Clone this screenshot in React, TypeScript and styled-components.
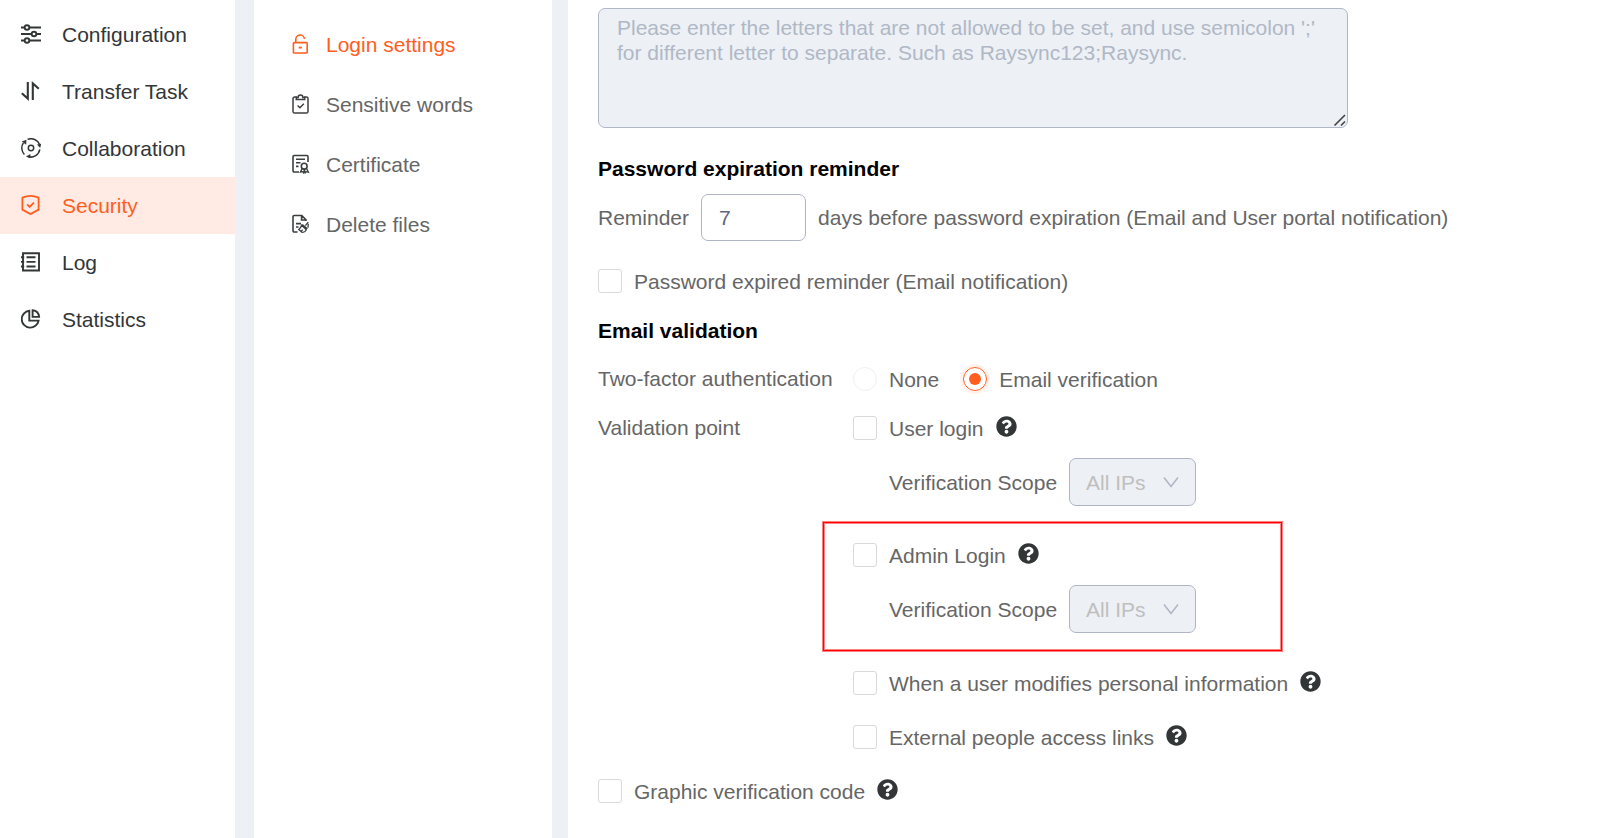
import React, { useState } from "react";
import styled, { createGlobalStyle } from "styled-components";
import { FaQuestionCircle } from "react-icons/fa";

const GlobalStyle = createGlobalStyle`
  *, *::before, *::after { box-sizing: border-box; }
  body {
    margin: 0;
    background: #ffffff;
    color: #666666;
    font: 21px/25px "Liberation Sans", Arial, sans-serif;
  }
  input, select, textarea, button { font: inherit; margin: 0; }
`;

const Page = styled.div`
  display: flex;
  min-height: 100vh;
  background: #edf0f5;
`;

const IconSvg = styled.svg`
  flex: none;
  width: 20px;
  height: 20px;
  fill: none;
  stroke: currentColor;
`;

const Sidebar = styled.nav`
  flex: 0 0 235px;
  margin-right: 19px;
  padding-top: 6px;
  background: #ffffff;
`;

const SidebarLink = styled.a<{ $active?: boolean }>`
  display: flex;
  align-items: center;
  gap: 21px;
  height: 57px;
  padding-left: 21px;
  color: ${(p) => (p.$active ? "#ff5e1f" : "#333637")};
  background: ${(p) => (p.$active ? "#ffebe4" : "transparent")};
  text-decoration: none;

  ${IconSvg} { margin-bottom: 2px; }
`;

const SubMenu = styled.nav`
  flex: 0 0 298px;
  margin-right: 16px;
  padding-top: 14px;
  background: #ffffff;
`;

const SubMenuLink = styled.a<{ $active?: boolean }>`
  display: flex;
  align-items: center;
  gap: 16px;
  height: 60px;
  padding-left: 36px;
  color: ${(p) => (p.$active ? "#ff5e1f" : "#666666")};
  text-decoration: none;

  ${IconSvg} {
    color: ${(p) => (p.$active ? "#ff5e1f" : "#3c3f40")};
  }
`;

const Content = styled.main`
  flex: 1;
  min-width: 0;
  padding: 8px 30px 20px;
  background: #ffffff;
`;

const ForbiddenWords = styled.textarea`
  display: block;
  width: 100%;
  max-width: 750px;
  height: 120px;
  padding: 6px 18px;
  border: 1px solid #b0b8c8;
  border-radius: 7px;
  background: #edf0f5;
  color: #606266;
  resize: both;

  &::placeholder { color: #b0b8c6; opacity: 1; }

  &::-webkit-resizer {
    background: url("data:image/svg+xml,%3Csvg xmlns='http://www.w3.org/2000/svg' width='15' height='15' fill='none' stroke='%23444' stroke-width='1.6'%3E%3Cpath d='M2.5 13.500L13 3M9 13.500L13 9.500'/%3E%3C/svg%3E") no-repeat;
  }
`;

const SectionTitle = styled.h2`
  margin: 0;
  font-size: 21px;
  line-height: 25px;
  font-weight: 700;
  color: #000000;
`;

const ReminderSection = styled.section`
  margin-top: 28px;
`;

const ReminderRow = styled.div`
  display: flex;
  align-items: center;
  gap: 12px;
  margin: 13px 0 13px;
`;

const DaysInput = styled.input`
  width: 105px;
  height: 47px;
  padding: 0 17px;
  border: 1px solid #b0b5c6;
  border-radius: 7px;
  background: #ffffff;
  color: #606680;
`;

const OptionRow = styled.div`
  display: flex;
  align-items: center;
  gap: 12px;
  height: 54px;
`;

const OptionLabel = styled.label`
  display: flex;
  align-items: center;
  gap: 12px;
`;

const Checkbox = styled.input.attrs({ type: "checkbox" })`
  appearance: none;
  flex: none;
  width: 24px;
  height: 24px;
  border: 1px solid #d9d9d9;
  border-radius: 3px;
  background: #ffffff;

  &:checked {
    border-color: #ff5e1f;
    background: #ff5e1f;
  }
`;

const Radio = styled.input.attrs({ type: "radio" })`
  appearance: none;
  flex: none;
  display: grid;
  place-items: center;
  width: 24px;
  height: 24px;
  border: 1px solid #f0f0f0;
  border-radius: 50%;

  &:checked {
    border-color: #ff5e1f;
    box-shadow: 0 0 0 3px #fff2ed;
  }
  &:checked::before {
    content: "";
    width: 12px;
    height: 12px;
    border-radius: 50%;
    background: #ff5e1f;
  }
`;

const HelpButton = styled.button`
  display: flex;
  margin-bottom: 3px;
  padding: 0;
  border: 0;
  background: none;
  color: #333637;
  font-size: 21px;
`;

const EmailSection = styled.section`
  margin-top: 10px;
`;

const FieldRow = styled.div`
  display: flex;
  align-items: flex-start;
`;

const FieldName = styled.div<{ $height: number }>`
  flex: 0 0 255px;
  line-height: ${(p) => p.$height}px;
`;

const RadioGroup = styled.div`
  display: flex;
  align-items: center;
  gap: 24px;
  height: 44px;
`;

const AuthRow = styled(FieldRow)`
  margin-top: 14px;
`;

const Options = styled.div`
  flex: 1;
  min-width: 0;
`;

const ScopeRow = styled.label`
  display: flex;
  align-items: center;
  gap: 12px;
  height: 54px;
  padding-left: 36px;
`;

const SelectBox = styled.span`
  display: grid;
  align-items: center;

  > * { grid-area: 1 / 1; }
`;

const Select = styled.select`
  appearance: none;
  width: 127px;
  height: 48px;
  padding: 0 16px;
  border: 1px solid #b0b5c6;
  border-radius: 7px;
  background: #edf0f5;
  color: #bfbfbf;
  opacity: 1;
`;

const Chevron = styled.svg`
  justify-self: end;
  width: 16px;
  height: 12px;
  margin-right: 17px;
  fill: none;
  stroke: #b0b5c6;
  stroke-width: 1.5;
  pointer-events: none;
`;

const Highlight = styled.div`
  max-width: 461px;
  margin: 12px 0 4px -31px;
  padding: 6px 28px 15px 30px;
  border: 1px solid #ff8080;
  box-shadow: inset 0 0 0 1px #ff0000, inset 0 0 0 2px #ff8080;
`;

const ConfigurationIcon = () => (
  <IconSvg viewBox="0 0 20 20" strokeWidth="1.9">
    <path d="M0 3.5h3.6M8.6 3.5H20M0 10h10.5M15.5 10H20M0 16.5h3.6M8.6 16.5H20" />
    <circle cx="6" cy="3.5" r="2.3" />
    <circle cx="13" cy="10" r="2.3" />
    <circle cx="6" cy="16.5" r="2.3" />
  </IconSvg>
);

const TransferIcon = () => (
  <IconSvg viewBox="0 0 20 20" strokeWidth="2.1">
    <path d="M6.8 1v16.600L.8 12.2M11.800 19V2.400l6 5.400" />
  </IconSvg>
);

const CollaborationIcon = () => (
  <IconSvg viewBox="0 0 20 20" strokeWidth="1.5">
    <circle cx="10" cy="10" r="2.7" />
    <path d="M3.4 16.4A9.2 9.2 0 0 1 2.4 4.800M6.6 1.4A9.2 9.2 0 0 1 18.6 6.6M18.8 11.4A9.2 9.2 0 0 1 7.4 18.8" />
    <path
      d="M.8 3.400l4.600-1.600-.200 5zM16 6.600l4.200-.800-1 4.200zM9.400 16v4.400l-4.400-2z"
      fill="currentColor"
      stroke="none"
    />
  </IconSvg>
);

const SecurityIcon = () => (
  <IconSvg viewBox="0 0 20 20" strokeWidth="1.8">
    <path d="M9.500.9c-2.600 0-5.600.7-8.100 1.700v12l8.100 4.500 8.100-4.500v-12C15.100 1.600 12.100.9 9.500.9z" />
    <path d="M6.100 9.300l2.600 2.600 4.200-4.400" />
  </IconSvg>
);

const LogIcon = () => (
  <IconSvg viewBox="0 0 20 20" strokeWidth="1.9">
    <path d="M2 1.300h16v17.200H2zM0 5.300h3.200M0 9.900h3.200M0 14.500h3.200M5.500 5.300h9M5.500 9.900h9M5.500 14.500h9" />
  </IconSvg>
);

const StatisticsIcon = () => (
  <IconSvg viewBox="0 0 20 20" strokeWidth="1.9">
    <path d="M8.300 1.700A8.500 8.500 0 1 0 17.600 11.600H8.300z" />
    <path d="M11.600 1.300V7.900h6.500C17.800 4.200 15.200 1.700 11.600 1.300z" />
  </IconSvg>
);

const UnlockIcon = () => (
  <IconSvg viewBox="0 0 20 20" strokeWidth="1.6">
    <rect x="3.400" y="8.600" width="13.800" height="10.400" rx=".8" />
    <path d="M5.800 8.600V5.800a4.300 4.300 0 0 1 8.600-.800" />
    <path d="M8.700 13.600h3.200" strokeWidth="1.900" />
  </IconSvg>
);

const ClipboardIcon = () => (
  <IconSvg viewBox="0 0 20 20" strokeWidth="1.5">
    <path d="M7 3H4.600A1.600 1.600 0 0 0 3 4.600v12.800A1.600 1.600 0 0 0 4.600 19h11.800a1.600 1.600 0 0 0 1.600-1.600V4.600A1.600 1.600 0 0 0 16.400 3H14" />
    <path d="M6.300 5.500V3.400h1.800a2.300 2.300 0 0 1 4.800 0h1.800v2.100zM7.600 11.500l2.300 2.200 3.900-4" />
  </IconSvg>
);

const CertificateIcon = () => (
  <IconSvg viewBox="0 0 20 20" strokeWidth="1.6">
    <path d="M9 18H4.200A1.200 1.200 0 0 1 3 16.800V2.700a1.200 1.200 0 0 1 1.200-1.200h12.600A1.200 1.200 0 0 1 18 2.700V8M6 5.300h9M6 8.800h4.500M6 12.400h2.500" />
    <circle cx="14.200" cy="12.200" r="2.900" />
    <path d="M12.200 14.400l-1.800 3.800 2.300-.500.900 1.200.800-3.500.800 3.500 1-1.200 2.200.500-1.900-3.800" strokeWidth="1.300" />
  </IconSvg>
);

const DeleteFilesIcon = () => (
  <IconSvg viewBox="0 0 20 20" strokeWidth="1.6">
    <path d="M7.600 18H4.200A1.200 1.200 0 0 1 3 16.800V2.700a1.200 1.200 0 0 1 1.200-1.200h7.600L16 5.800V7M11.600 1.500V6H16M6 9.600h5M6 13h2.500" />
    <path
      d="M18.200 8.200l-2.800 3.400M12.300 10.400l5 4.400M11.600 11.300l4.700 4.400c-.800 1.700-2.500 2.900-4.500 2.500l-3-2.700c1.300-.800 2.200-2.200 2.800-4.200zM11.200 17.400l1.400-1.800M18.300 9.600l-.300 4.200"
      strokeWidth="1.300"
    />
  </IconSvg>
);

const sidebarItems = [
  { name: "Configuration", Icon: ConfigurationIcon },
  { name: "Transfer Task", Icon: TransferIcon },
  { name: "Collaboration", Icon: CollaborationIcon },
  { name: "Security", Icon: SecurityIcon, active: true },
  { name: "Log", Icon: LogIcon },
  { name: "Statistics", Icon: StatisticsIcon },
];

const subMenuItems = [
  { name: "Login settings", Icon: UnlockIcon, active: true },
  { name: "Sensitive words", Icon: ClipboardIcon },
  { name: "Certificate", Icon: CertificateIcon },
  { name: "Delete files", Icon: DeleteFilesIcon },
];

function CheckOption({ label, help }: { label: string; help?: boolean }) {
  return (
    <OptionRow>
      <OptionLabel>
        <Checkbox />
        {label}
      </OptionLabel>
      {help && (
        <HelpButton type="button" aria-label={`Help: ${label}`}>
          <FaQuestionCircle />
        </HelpButton>
      )}
    </OptionRow>
  );
}

function VerificationScope() {
  return (
    <ScopeRow>
      Verification Scope
      <SelectBox>
        <Select disabled>
          <option>All IPs</option>
        </Select>
        <Chevron viewBox="0 0 16 12">
          <path d="M1 1.500l7 9L15 1.500" />
        </Chevron>
      </SelectBox>
    </ScopeRow>
  );
}

export default function App() {
  const [days, setDays] = useState("7");
  const [method, setMethod] = useState("email");

  return (
    <Page>
      <GlobalStyle />
      <Sidebar aria-label="Main">
        {sidebarItems.map(({ name, Icon, active }) => (
          <SidebarLink key={name} href="#" $active={active}>
            <Icon />
            {name}
          </SidebarLink>
        ))}
      </Sidebar>
      <SubMenu aria-label="Security">
        {subMenuItems.map(({ name, Icon, active }) => (
          <SubMenuLink key={name} href="#" $active={active}>
            <Icon />
            {name}
          </SubMenuLink>
        ))}
      </SubMenu>
      <Content>
        <ForbiddenWords
          aria-label="Forbidden letters"
          placeholder="Please enter the letters that are not allowed to be set, and use semicolon ';' for different letter to separate. Such as Raysync123;Raysync."
        />
        <ReminderSection>
          <SectionTitle>Password expiration reminder</SectionTitle>
          <ReminderRow>
            <label htmlFor="days">Reminder</label>
            <DaysInput id="days" value={days} onChange={(e) => setDays(e.target.value)} />
            <span>days before password expiration (Email and User portal notification)</span>
          </ReminderRow>
          <CheckOption label="Password expired reminder (Email notification)" />
        </ReminderSection>
        <EmailSection>
          <SectionTitle>Email validation</SectionTitle>
          <AuthRow role="radiogroup" aria-labelledby="two-factor">
            <FieldName id="two-factor" $height={44}>Two-factor authentication</FieldName>
            <RadioGroup>
              <OptionLabel>
                <Radio name="method" checked={method === "none"} onChange={() => setMethod("none")} />
                None
              </OptionLabel>
              <OptionLabel>
                <Radio name="method" checked={method === "email"} onChange={() => setMethod("email")} />
                Email verification
              </OptionLabel>
            </RadioGroup>
          </AuthRow>
          <FieldRow role="group" aria-labelledby="validation-point">
            <FieldName id="validation-point" $height={54}>Validation point</FieldName>
            <Options>
              <CheckOption label="User login" help />
              <VerificationScope />
              <Highlight>
                <CheckOption label="Admin Login" help />
                <VerificationScope />
              </Highlight>
              <CheckOption label="When a user modifies personal information" help />
              <CheckOption label="External people access links" help />
            </Options>
          </FieldRow>
          <CheckOption label="Graphic verification code" help />
        </EmailSection>
      </Content>
    </Page>
  );
}
